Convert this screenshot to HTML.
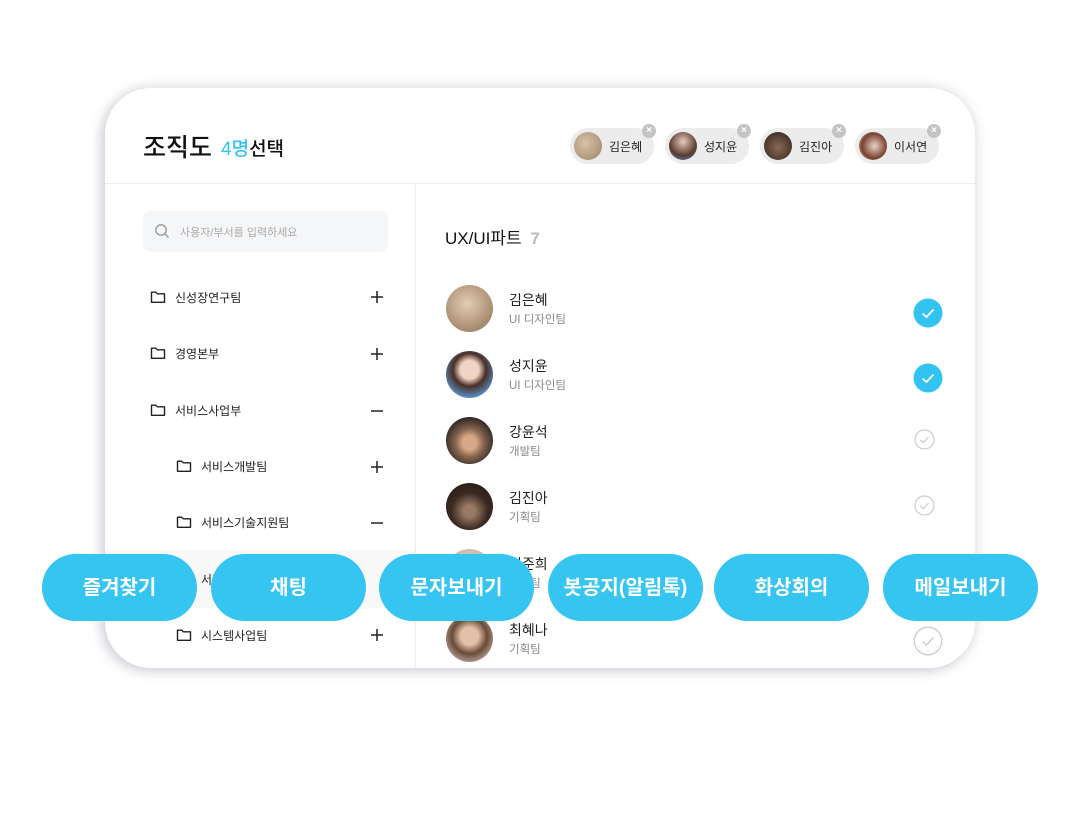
<!DOCTYPE html>
<html><head><meta charset="utf-8"><style>
*{margin:0;padding:0;box-sizing:border-box}
body{width:1080px;height:840px;background:#fff;position:relative;overflow:hidden;font-family:"Liberation Sans","Noto Sans CJK KR",sans-serif;color:#222}
.card{position:absolute;left:105px;top:88px;width:870px;height:580px;background:#fff;border-radius:46px;box-shadow:0 0 14px rgba(0,0,0,.14),-5px 4px 12px rgba(120,130,160,.2);overflow:hidden}
.abs{position:absolute}
.title{left:38px;top:40px;font-size:25px;font-weight:500;color:#111}
.sel{left:116px;top:46px;font-size:19px;font-weight:500;color:#111}
.sel b{color:#33c3f0;font-weight:500}
.hline{left:0;top:95px;width:870px;height:1px;background:#ececee}
.vline{left:310px;top:96px;width:1px;height:500px;background:#ececee}
.chip{position:absolute;top:40px;width:84px;height:36px;border-radius:18px;background:#ececec;font-size:12px;color:#222}
.chip .av{position:absolute;left:4px;top:4px;width:28px;height:28px;border-radius:50%}
.chip span{position:absolute;left:39px;top:10px}
.chip .x{position:absolute;right:-2px;top:-4px;width:14px;height:14px;border-radius:50%;background:#c4c4c4;color:#fff;font-size:10px;line-height:14px;text-align:center;font-weight:bold}
.search{left:38px;top:123px;width:245px;height:41px;background:#f5f6f8;border-radius:8px}
.search span{position:absolute;left:37px;top:13px;font-size:11px;color:#aaa}
.item{position:absolute;font-size:12px;color:#222;height:20px}
.item svg{position:absolute;left:0;top:2px}
.item span{position:absolute;left:25px;top:1px;white-space:nowrap}
.pm{position:absolute;width:14px;height:14px}
.row{position:absolute;left:341px;width:500px;height:48px}
.row .av{position:absolute;left:0;top:0;width:47px;height:47px;border-radius:50%}
.row .n{position:absolute;left:63px;top:5px;font-size:14px;color:#222}
.row .s{position:absolute;left:63px;top:26px;font-size:11.5px;color:#888}
.chk{position:absolute;border-radius:50%}
.btn{position:absolute;top:554px;width:155px;height:67px;border-radius:34px;background:#36c5f1;color:#fff;font-size:20px;font-weight:bold;text-align:center;line-height:69px}
</style></head><body>
<div class="card">
<div class="abs title">조직도</div>
<div class="abs sel"><b>4명</b>선택</div>
<div class="chip" style="left:465px"><div class="av" style="background:radial-gradient(circle at 40% 40%,#d9c3a8,#9a8268)"></div><span>김은혜</span><div class="x">×</div></div>
<div class="chip" style="left:560px"><div class="av" style="background:radial-gradient(circle at 50% 35%,#e8cbbb,#5a3a30 60%,#4d8fcf)"></div><span>성지윤</span><div class="x">×</div></div>
<div class="chip" style="left:655px"><div class="av" style="background:radial-gradient(circle at 50% 55%,#8a6a55,#2a1e18)"></div><span>김진아</span><div class="x">×</div></div>
<div class="chip" style="left:750px"><div class="av" style="background:radial-gradient(circle at 55% 50%,#e8d5c8,#7a4030 60%,#ddd)"></div><span>이서연</span><div class="x">×</div></div>
<div class="abs hline"></div><div class="abs vline"></div>
<div class="abs search"><svg class="abs" style="left:11px;top:12px" width="16" height="16" viewBox="0 0 16 16"><circle cx="7" cy="7" r="5.2" fill="none" stroke="#999" stroke-width="1.4"/><path d="M11 11l3.5 3.5" stroke="#999" stroke-width="1.4"/></svg><span>사용자/부서를 입력하세요</span></div>
<div class="abs" style="left:0;top:462px;width:310px;height:58px;background:#f8f8f9"></div>
</div>
<svg width="0" height="0" style="position:absolute"><defs><symbol id="f" viewBox="0 0 16 14"><path d="M1.5 2.2h4.3l1.5 1.6h7.2v8.5H1.5z" fill="none" stroke="#222" stroke-width="1.4" stroke-linejoin="round"/></symbol><symbol id="p" viewBox="0 0 14 14"><path d="M1 7h12M7 1v12" stroke="#222" stroke-width="1.5"/></symbol><symbol id="m" viewBox="0 0 14 14"><path d="M1 7h12" stroke="#222" stroke-width="1.5"/></symbol></defs></svg>
<div class="item" style="left:150px;top:288px"><svg width="16" height="14"><use href="#f"/></svg><span>신성장연구팀</span></div>
<svg class="pm" style="left:370px;top:290px"><use href="#p"/></svg>
<div class="item" style="left:150px;top:344px"><svg width="16" height="14"><use href="#f"/></svg><span>경영본부</span></div>
<svg class="pm" style="left:370px;top:347px"><use href="#p"/></svg>
<div class="item" style="left:150px;top:401px"><svg width="16" height="14"><use href="#f"/></svg><span>서비스사업부</span></div>
<svg class="pm" style="left:370px;top:404px"><use href="#m"/></svg>
<div class="item" style="left:176px;top:457px"><svg width="16" height="14"><use href="#f"/></svg><span>서비스개발팀</span></div>
<svg class="pm" style="left:370px;top:460px"><use href="#p"/></svg>
<div class="item" style="left:176px;top:513px"><svg width="16" height="14"><use href="#f"/></svg><span>서비스기술지원팀</span></div>
<svg class="pm" style="left:370px;top:516px"><use href="#m"/></svg>
<div class="item" style="left:176px;top:570px"><svg width="16" height="14"><use href="#f"/></svg><span>서비스운영팀</span></div>
<div class="item" style="left:176px;top:626px"><svg width="16" height="14"><use href="#f"/></svg><span>시스템사업팀</span></div>
<svg class="pm" style="left:370px;top:628px"><use href="#p"/></svg>

<div class="abs" style="left:445px;top:224px;font-size:17px;color:#111">UX/UI파트 <b style="color:#bbb;margin-left:4px">7</b></div>
<div class="row" style="left:446px;top:285px"><div class="av" style="background:radial-gradient(circle at 45% 40%,#e2cdb4,#a88a6e 70%,#7a9ab0)"></div><div class="n">김은혜</div><div class="s">UI 디자인팀</div></div>
<div class="row" style="left:446px;top:351px"><div class="av" style="background:radial-gradient(circle at 50% 40%,#f0d5c5 25%,#4a2e25 45%,#5a9ad8 80%)"></div><div class="n">성지윤</div><div class="s">UI 디자인팀</div></div>
<div class="row" style="left:446px;top:417px"><div class="av" style="background:radial-gradient(circle at 50% 55%,#d8a888 20%,#8a6650 40%,#2a2420 75%)"></div><div class="n">강윤석</div><div class="s">개발팀</div></div>
<div class="row" style="left:446px;top:483px"><div class="av" style="background:radial-gradient(circle at 50% 60%,#9a7a65 15%,#3a2a22 50%,#1e1612)"></div><div class="n">김진아</div><div class="s">기획팀</div></div>
<div class="row" style="left:446px;top:549px"><div class="av" style="background:radial-gradient(circle,#e8dccb,#bfae98)"></div><div class="n">이준희</div><div class="s">기획팀</div></div>
<div class="row" style="left:446px;top:615px"><div class="av" style="background:radial-gradient(circle at 50% 45%,#e4c0a8 25%,#6a4a38 50%,#e8e4e0)"></div><div class="n">최혜나</div><div class="s">기획팀</div></div>

<svg class="chk" style="left:913px;top:298px" width="30" height="30" viewBox="0 0 30 30"><circle cx="15" cy="15" r="14.5" fill="#33c3f0"/><path d="M9.5 15.5l4 3.5 7-7.5" fill="none" stroke="#fff" stroke-width="1.8"/></svg>
<svg class="chk" style="left:913px;top:363px" width="30" height="30" viewBox="0 0 30 30"><circle cx="15" cy="15" r="14.5" fill="#33c3f0"/><path d="M9.5 15.5l4 3.5 7-7.5" fill="none" stroke="#fff" stroke-width="1.8"/></svg>
<svg class="chk" style="left:914px;top:429px" width="21" height="21" viewBox="0 0 21 21"><circle cx="10.5" cy="10.5" r="9.5" fill="none" stroke="#ccc" stroke-width="1.2"/><path d="M6.5 11l3 2.5 5-5.5" fill="none" stroke="#ccc" stroke-width="1.2"/></svg>
<svg class="chk" style="left:914px;top:495px" width="21" height="21" viewBox="0 0 21 21"><circle cx="10.5" cy="10.5" r="9.5" fill="none" stroke="#ccc" stroke-width="1.2"/><path d="M6.5 11l3 2.5 5-5.5" fill="none" stroke="#ccc" stroke-width="1.2"/></svg>
<svg class="chk" style="left:913px;top:626px" width="30" height="30" viewBox="0 0 30 30"><circle cx="15" cy="15" r="13.8" fill="none" stroke="#ccc" stroke-width="1.3"/><path d="M9.5 15.5l4 3.5 7-7.5" fill="none" stroke="#ccc" stroke-width="1.3"/></svg>

<div class="btn" style="left:42px">즐겨찾기</div>
<div class="btn" style="left:211px">채팅</div>
<div class="btn" style="left:379px">문자보내기</div>
<div class="btn" style="left:548px">봇공지(알림톡)</div>
<div class="btn" style="left:714px">화상회의</div>
<div class="btn" style="left:883px">메일보내기</div>
</body></html>
